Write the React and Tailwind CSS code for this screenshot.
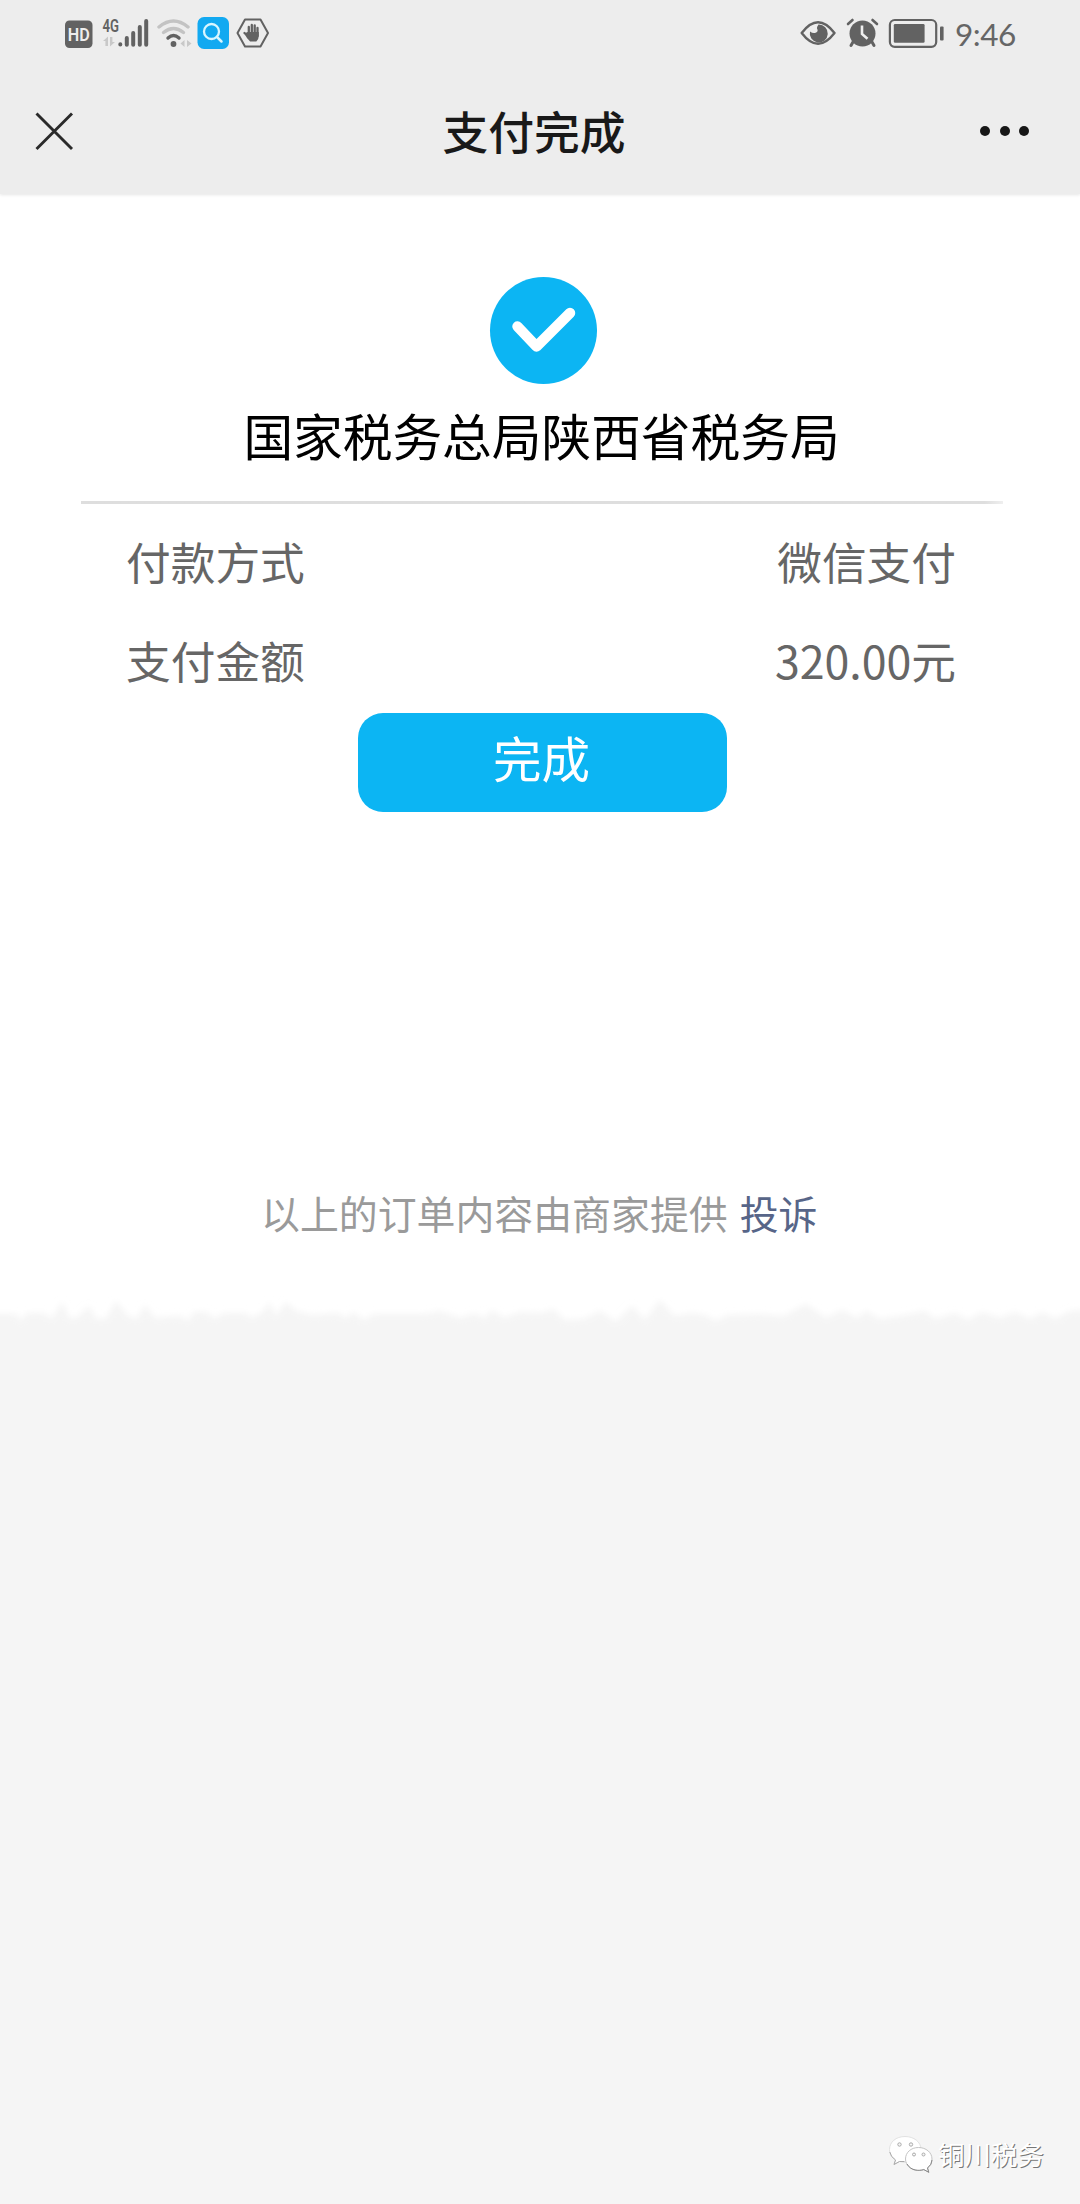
import React from 'react';

const sans = "font-['Noto_Sans_CJK_SC',sans-serif]";

function StatusBar() {
  return (
    <div className="flex h-[66px] items-start justify-between pl-[63px] pr-[66px] text-[#666]">
      <div className="flex items-start pt-[14px]">
        <svg className="h-[40px] w-[32px]" viewBox="63 14 32 40">
          <rect x="65" y="20.5" width="27.5" height="27.5" rx="4.5" fill="#626262" />
          <text x="78.8" y="41" textAnchor="middle" fontSize="18" fontWeight="600" textLength="22" lengthAdjust="spacingAndGlyphs" fill="#eee" className="font-['Roboto',sans-serif]">HD</text>
        </svg>
        <svg className="ml-[6px] h-[40px] w-[50px]" viewBox="101 14 50 40">
          <text x="102.5" y="32" fontSize="17.5" fontWeight="600" textLength="16.5" lengthAdjust="spacingAndGlyphs" fill="#626262" className="font-['Roboto',sans-serif]">4G</text>
          <g fill="#c8c8c8">
            <path d="M103 41 108 36.5V46h-2.6v-5zM110 37h2.4v5h2.6l-5 4.5z" />
          </g>
          <g stroke="#626262" strokeWidth="4" strokeLinecap="round">
            <path d="M120.3 44.3v.3M126.8 38v6.8M133.2 33v11.8M139.8 27v17.8M146.2 21v23.8" />
          </g>
        </svg>
        <svg className="ml-[5px] h-[40px] w-[38px]" viewBox="156 14 38 40" fill="none" strokeWidth="3.4" strokeLinecap="round">
          <path d="M159 27Q173.500 15 188 27" stroke="#c3c3c3" />
          <path d="M163.500 32.500Q173.500 24.500 183.500 32.500" stroke="#c3c3c3" />
          <path d="M168 38Q173.500 33 179 38" stroke="#626262" />
          <circle cx="173.500" cy="44" r="2.900" fill="#626262" />
          <path d="m180.500 43.500 4-3.500v7zM187 40l4.500 3.500-4.500 3.500z" fill="#c8c8c8" />
        </svg>
        <svg className="ml-[2px] h-[40px] w-[34px]" viewBox="196 14 34 40">
          <rect x="197.500" y="17" width="31.500" height="32" rx="6.500" fill="#12a9f1" />
          <circle cx="211.500" cy="31.500" r="7.500" fill="none" stroke="#d9f6ff" strokeWidth="2.300" />
          <path d="m217 37 4.500 4.500" stroke="#d9f6ff" strokeWidth="2.500" strokeLinecap="round" />
        </svg>
        <svg className="ml-[6px] h-[40px] w-[34px]" viewBox="235 14 34 40">
          <path d="M244 19.500h15.500l7.500 13.500-7.500 13.500H244L236.500 33z" fill="none" stroke="#626262" strokeWidth="2" strokeLinejoin="round" />
          <g stroke="#626262" strokeWidth="2.300" strokeLinecap="round">
            <path d="M247.800 27v8M250.800 25v8M253.700 25.500v8M256.500 28v8M243.500 33l3.500 3" />
          </g>
          <path d="M246.600 32h11.200v4q0 3-2.500 5.600h-6.200Q246 39 243.300 33.500z" fill="#626262" />
        </svg>
      </div>

      <div className="flex items-start pt-[14px]">
        <svg className="h-[40px] w-[36px]" viewBox="801 14 36 40">
          <path d="M802.700 33Q819 11.500 835.500 33 819 54.500 802.700 33z" fill="none" stroke="#626262" strokeWidth="2.400" strokeLinejoin="round" />
          <path d="M819.500 24.500a9 9 0 1 1-8.500 7q2.500 2 5 1.500 4-1.500 2-4.500 0-2 1.500-4z" fill="#626262" />
        </svg>
        <svg className="ml-[10px] h-[40px] w-[34px]" viewBox="846 14 34 40">
          <circle cx="862.500" cy="33.500" r="13" fill="#626262" />
          <path d="m848 24 4.500-4M877 24l-4.500-4" stroke="#626262" strokeWidth="2.600" strokeLinecap="round" />
          <path d="m853 42-2 3.500M872 42l2 3.500" stroke="#626262" strokeWidth="3" strokeLinecap="round" />
          <path d="M862 25.500V34l5.500 4.800" fill="none" stroke="#eee" strokeWidth="2.600" />
        </svg>
        <svg className="ml-[8px] h-[40px] w-[58px]" viewBox="888 14 58 40">
          <rect x="889.900" y="20" width="46.300" height="26.800" rx="4.800" fill="none" stroke="#626262" strokeWidth="2.200" />
          <rect x="893.800" y="24" width="30.800" height="18.700" rx="1.300" fill="#626262" />
          <rect x="940" y="26.500" width="3.600" height="14" rx="1" fill="#626262" />
        </svg>
        <span className="ml-[9px] w-[59px] whitespace-nowrap font-['Lato',sans-serif] text-[31.5px] leading-[40px] tracking-[-0.5px]">9:46</span>
      </div>
    </div>
  );
}

function NavBar() {
  return (
    <div className="grid h-[128px] grid-cols-[400px_1fr_400px] items-center">
      <svg className="ml-[34px] mt-[44px] h-[42px] w-[42px] self-start" viewBox="34 110 42 42">
        <path d="m36.500 113.500 35.500 35.500M72 113.500 36.500 149" stroke="#2a2a2a" strokeWidth="2.900" fill="none" />
      </svg>
      <h1 className={`${sans} -mt-[1px] whitespace-nowrap pr-[12px] text-center text-[45.8px] font-medium leading-[60px] text-[#191919]`}>支付完成</h1>
      <div className="mr-[51px] mt-[60px] flex gap-[9.500px] self-start justify-self-end">
        <i className="size-[10px] rounded-full bg-[#171717]" />
        <i className="size-[10px] rounded-full bg-[#171717]" />
        <i className="size-[10px] rounded-full bg-[#171717]" />
      </div>
    </div>
  );
}

function DetailRow({ label, value }) {
  return (
    <div className="flex h-[99px] items-center justify-between text-[44.7px] leading-[60px] text-[#666]">
      <span>{label}</span>
      <span>{value}</span>
    </div>
  );
}

function TornEdge() {
  return (
    <svg className="block h-[34px] w-full" viewBox="0 1296 1080 34">
      <defs>
        <filter id="soft" x="-2%" y="-40%" width="104%" height="180%">
          <feGaussianBlur stdDeviation="3" />
        </filter>
      </defs>
      <rect y="1296" width="1080" height="34" fill="#fff" />
      <path
        filter="url(#soft)"
        fill="#f5f5f5"
        transform="translate(0 3)"
        d="M-20 1345V1311H16L21 1318 27 1310H44L52 1316 62 1299 70 1316 78 1314 89 1303 96 1316 106 1316 116 1298 128 1313 137 1316 145 1302 155 1315 180 1313 188 1318 194 1309H207L214 1316 224 1310H246L252 1315 264 1308 269 1299 276 1313 286 1299 296 1308 312 1312 338 1310 346 1315 353 1309 364 1317 374 1311H425L440 1308 460 1315 476 1310 484 1316 492 1307 504 1315 520 1309 542 1310 553 1306 565 1317 584 1316 600 1308 616 1319 632 1303 645 1317 660 1297 674 1313 692 1310 705 1312 716 1318 728 1312 760 1311 784 1313 806 1301 826 1315 842 1307 857 1315 866 1308 880 1316 900 1313 925 1308 935 1316 955 1310 968 1317 982 1309 1000 1315 1015 1309 1030 1316 1043 1309 1055 1316 1070 1308 1100 1307V1345z"
      />
    </svg>
  );
}

function Watermark() {
  return (
    <div className="flex h-[48px] items-center pl-[887px]">
      <svg className="h-[44px] w-[48px]" viewBox="887 2133 48 44" strokeWidth="1">
        <path d="M905 2137.500c-9 0-15.500 5.500-15.500 13 0 4.500 2.200 8 6 10.400l-1.500 4.600 5.500-3c8 2.500 21.500-.5 21.500-12 0-7.500-7-13-16-13z" fill="#fff" stroke="#e2e2e2" />
        <path d="M889.800 2153q1 5 5.700 8l-1.500 4.500 5.500-3h5" fill="none" stroke="#aaa" />
        <path d="M918.500 2148.500c-7.500 0-13 5-13 11.500s6 11.500 13 11.500c2 0 3.500-.3 5.300-.9l5 2.700-1.300-4.300c3-2.100 4.500-5.400 4.500-9 0-6.500-6-11.500-13.500-11.500z" fill="#fff" stroke="#c4c4c4" />
        <path d="M907 2165c4 7 12 7 16.800 5.600l5 2.700-1.300-4.300q4.500-3.500 4.500-8" fill="none" stroke="#888" />
        <g fill="#f7f7f7" stroke="#aaa">
          <circle cx="899.500" cy="2145.500" r="1.700" />
          <circle cx="911" cy="2145.500" r="1.700" />
          <circle cx="914" cy="2155.500" r="1.500" />
          <circle cx="923.500" cy="2155.500" r="1.500" />
        </g>
      </svg>
      <span className="ml-[3px] whitespace-nowrap text-[26.5px] leading-[40px] text-white [text-shadow:1px_1px_0.500px_#777]">铜川税务</span>
    </div>
  );
}

export default function App() {
  return (
    <div className={`${sans} flex h-[2204px] w-[1080px] flex-col overflow-hidden bg-[#f5f5f5]`}>
      <header className="relative h-[194px] shrink-0 bg-[#ededed] shadow-[0_1px_3px_#e6e6e6]">
        <StatusBar />
        <NavBar />
      </header>

      <main className="flex h-[1102px] shrink-0 flex-col bg-white">
        <svg className="ml-[489px] mt-[82px] size-[109px] shrink-0" viewBox="0 0 109 109">
          <circle cx="54.500" cy="54.500" r="53.500" fill="#0cb5f3" />
          <path d="M28.500 50.500 47.500 70.500 81 37" fill="none" stroke="#fff" strokeWidth="10.500" strokeLinecap="round" strokeLinejoin="round" />
        </svg>
        <h2 className="ml-[3px] mt-[14px] whitespace-nowrap text-center text-[49.7px] leading-[70px] text-black">国家税务总局陕西省税务局</h2>
        <div className="ml-[81px] mt-[32px] h-[3px] w-[922px] shrink-0 bg-gradient-to-r from-[#dedede] from-98% to-[#efefef]" />
        <section className="mt-[7px] h-[202px] shrink-0 pl-[126px] pr-[124px]">
          <DetailRow label="付款方式" value="微信支付" />
          <DetailRow label="支付金额" value="320.00元" />
        </section>
        <button className="ml-[358px] block h-[99px] w-[369px] shrink-0 rounded-[25px] bg-[#0cb5f3] pb-[11px] pr-[2px] text-[48.5px] leading-[60px] text-white">完成</button>
        <p className="mt-[372px] whitespace-nowrap pl-[261px] text-[38.900px] leading-[56px] text-[#9a9a9a]">
          以上的订单内容由商家提供
          <span className="ml-[12px] text-[#576588]">投诉</span>
        </p>
      </main>

      <TornEdge />
      <div className="grow" />
      <footer className="mb-[26px]">
        <Watermark />
      </footer>
    </div>
  );
}
